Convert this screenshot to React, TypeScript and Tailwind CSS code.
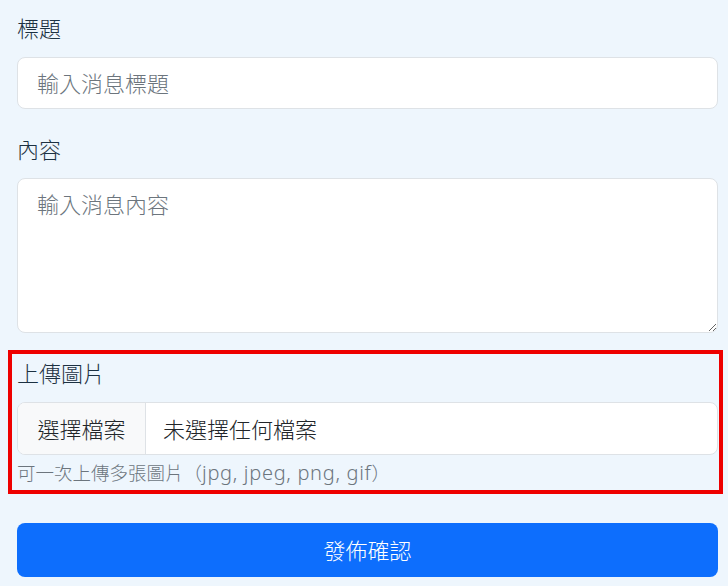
import React from "react";

const FONT = {
  fontFamily: '"Noto Sans", "Noto Sans CJK TC", sans-serif',
};

export default function App() {
  return (
    <div
      className="min-h-[586px] w-[728px] bg-[#eef6fd] pl-[17px] pr-[10px] pt-[13px] font-light text-[#212529]"
      style={FONT}
    >
      <div className="mb-[25px]">
        <label className="mb-[14px] block text-[22px] leading-[30px] text-[#1c3142]">標題</label>
        <input
          type="text"
          placeholder="輸入消息標題"
          className="block h-[52px] w-full rounded-[8px] border border-[#dee2e6] bg-white px-[19px] text-[22px] font-light leading-[30px] text-[#212529] outline-none placeholder:text-[#6c757d]"
        />
      </div>

      <div className="mb-[25px]">
        <label className="mb-[14px] block text-[22px] leading-[30px] text-[#1c3142]">內容</label>
        <textarea
          placeholder="輸入消息內容"
          className="block h-[155px] w-full rounded-[8px] border border-[#dee2e6] bg-white px-[19px] py-[10px] text-[22px] font-light leading-[30px] text-[#212529] outline-none placeholder:text-[#6c757d]"
        />
      </div>

      <div className="relative">
        <div className="pointer-events-none absolute -bottom-[7px] -left-[9px] -right-[5px] -top-[8px] border-4 border-[#ee0000]" />
        <label className="mb-[14px] block text-[22px] leading-[30px] text-[#1c3142]">上傳圖片</label>
        <div className="flex h-[53px] w-full overflow-hidden rounded-[8px] border border-[#dee2e6] bg-white">
          <div className="flex w-[128px] shrink-0 items-center justify-center border-r border-[#dee2e6] bg-[#f8f9fa] text-[22px] leading-[30px] text-[#212529]">
            選擇檔案
          </div>
          <div className="flex items-center pl-[17px] text-[22px] leading-[30px] text-[#212529]">
            未選擇任何檔案
          </div>
        </div>
        <div className="mt-[4px] text-[18.5px] leading-[28px] text-[#6c757d]">
          可一次上傳多張圖片（<span className="text-[20px] tracking-[0.7px]">jpg, jpeg, png, gif</span>）
        </div>
      </div>

      <button
        type="button"
        className="mt-[36px] flex h-[54px] w-full items-center justify-center rounded-[8px] bg-[#0d6efd] text-[22px] font-light leading-[30px] text-white"
      >
        發佈確認
      </button>
    </div>
  );
}
